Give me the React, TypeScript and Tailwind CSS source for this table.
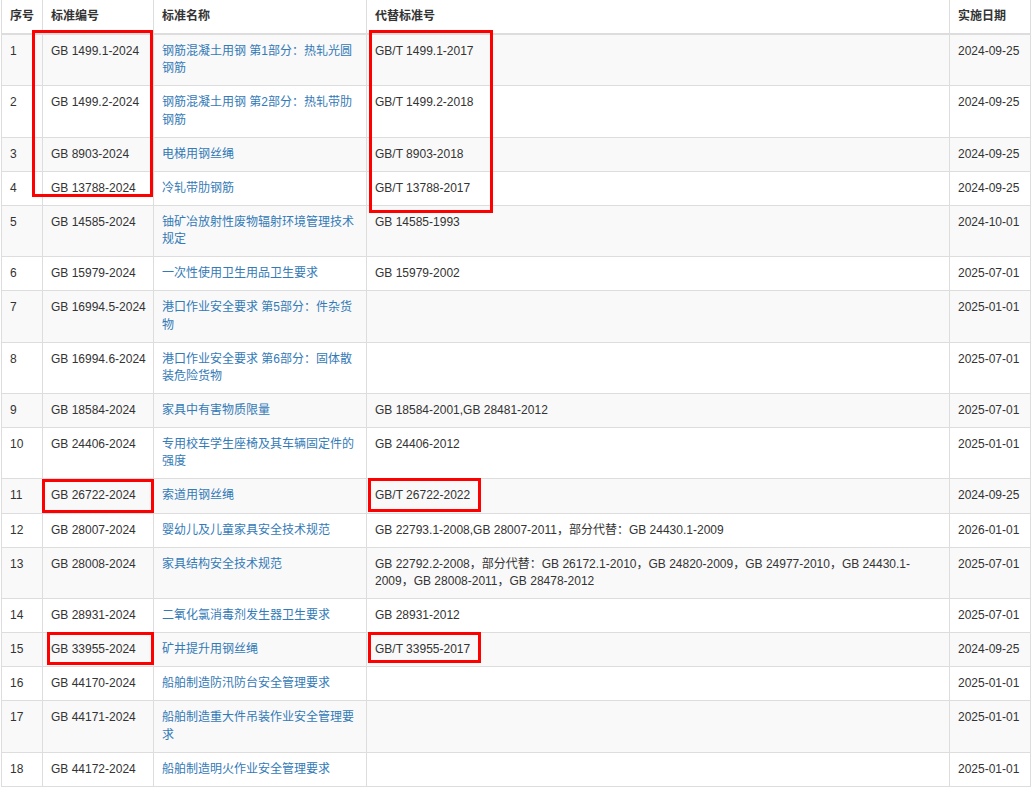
import React from "react";

type Row = {
  no: number;
  code: string;
  name: string;
  replaces: string;
  date: string;
};

const rows: Row[] = [
  { no: 1, code: "GB 1499.1-2024", name: "钢筋混凝土用钢 第1部分：热轧光圆钢筋", replaces: "GB/T 1499.1-2017", date: "2024-09-25" },
  { no: 2, code: "GB 1499.2-2024", name: "钢筋混凝土用钢 第2部分：热轧带肋钢筋", replaces: "GB/T 1499.2-2018", date: "2024-09-25" },
  { no: 3, code: "GB 8903-2024", name: "电梯用钢丝绳", replaces: "GB/T 8903-2018", date: "2024-09-25" },
  { no: 4, code: "GB 13788-2024", name: "冷轧带肋钢筋", replaces: "GB/T 13788-2017", date: "2024-09-25" },
  { no: 5, code: "GB 14585-2024", name: "铀矿冶放射性废物辐射环境管理技术规定", replaces: "GB 14585-1993", date: "2024-10-01" },
  { no: 6, code: "GB 15979-2024", name: "一次性使用卫生用品卫生要求", replaces: "GB 15979-2002", date: "2025-07-01" },
  { no: 7, code: "GB 16994.5-2024", name: "港口作业安全要求 第5部分：件杂货物", replaces: "", date: "2025-01-01" },
  { no: 8, code: "GB 16994.6-2024", name: "港口作业安全要求 第6部分：固体散装危险货物", replaces: "", date: "2025-07-01" },
  { no: 9, code: "GB 18584-2024", name: "家具中有害物质限量", replaces: "GB 18584-2001,GB 28481-2012", date: "2025-07-01" },
  { no: 10, code: "GB 24406-2024", name: "专用校车学生座椅及其车辆固定件的强度", replaces: "GB 24406-2012", date: "2025-01-01" },
  { no: 11, code: "GB 26722-2024", name: "索道用钢丝绳", replaces: "GB/T 26722-2022", date: "2024-09-25" },
  { no: 12, code: "GB 28007-2024", name: "婴幼儿及儿童家具安全技术规范", replaces: "GB 22793.1-2008,GB 28007-2011，部分代替：GB 24430.1-2009", date: "2026-01-01" },
  {
    no: 13,
    code: "GB 28008-2024",
    name: "家具结构安全技术规范",
    replaces: "GB 22792.2-2008，部分代替：GB 26172.1-2010，GB 24820-2009，GB 24977-2010，GB 24430.1-2009，GB 28008-2011，GB 28478-2012",
    date: "2025-07-01",
  },
  { no: 14, code: "GB 28931-2024", name: "二氧化氯消毒剂发生器卫生要求", replaces: "GB 28931-2012", date: "2025-07-01" },
  { no: 15, code: "GB 33955-2024", name: "矿井提升用钢丝绳", replaces: "GB/T 33955-2017", date: "2024-09-25" },
  { no: 16, code: "GB 44170-2024", name: "船舶制造防汛防台安全管理要求", replaces: "", date: "2025-01-01" },
  { no: 17, code: "GB 44171-2024", name: "船舶制造重大件吊装作业安全管理要求", replaces: "", date: "2025-01-01" },
  { no: 18, code: "GB 44172-2024", name: "船舶制造明火作业安全管理要求", replaces: "", date: "2025-01-01" },
];

const th = "border border-t-0 border-b-2 border-[#ddd] p-2 text-left align-bottom font-bold";
const td = "border border-[#ddd] p-2 align-top";

export default function App() {
  return (
    <div
      className="relative min-h-[790px] w-[1033px] overflow-hidden bg-white pl-px text-[12px] leading-[1.42857] text-[#333]"
      style={{ fontFamily: '"Liberation Sans", "Noto Sans CJK SC", sans-serif' }}
    >
      <table className="w-[1029px] table-fixed border-collapse">
        <colgroup>
          <col className="w-[41px]" />
          <col className="w-[111px]" />
          <col className="w-[213px]" />
          <col className="w-[583px]" />
          <col className="w-[81px]" />
        </colgroup>
        <thead>
          <tr>
            <th className={th}>序号</th>
            <th className={th}>标准编号</th>
            <th className={th}>标准名称</th>
            <th className={th}>代替标准号</th>
            <th className={th}>实施日期</th>
          </tr>
        </thead>
        <tbody>
          {rows.map((r) => (
            <tr key={r.no} className={r.no % 2 === 1 ? "bg-[#f9f9f9]" : "bg-white"}>
              <td className={td}>{r.no}</td>
              <td className={`${td} whitespace-nowrap`}>{r.code}</td>
              <td className={td}>
                <a className="text-[#337ab7]">{r.name}</a>
              </td>
              <td className={td}>{r.replaces}</td>
              <td className={`${td} whitespace-nowrap`}>{r.date}</td>
            </tr>
          ))}
        </tbody>
      </table>

      {/* red highlight boxes drawn over the table */}
      <div className="pointer-events-none absolute left-[32px] top-[30px] h-[167px] w-[121px] border-[3px] border-[#ff0000]" />
      <div className="pointer-events-none absolute left-[369px] top-[30px] h-[183px] w-[124px] border-[3px] border-[#ff0000]" />
      <div className="pointer-events-none absolute left-[42px] top-[479px] h-[34px] w-[112px] border-[3px] border-[#ff0000]" />
      <div className="pointer-events-none absolute left-[368px] top-[478px] h-[34px] w-[113px] border-[3px] border-[#ff0000]" />
      <div className="pointer-events-none absolute left-[47px] top-[632px] h-[33px] w-[107px] border-[3px] border-[#ff0000]" />
      <div className="pointer-events-none absolute left-[368px] top-[632px] h-[31px] w-[113px] border-[3px] border-[#ff0000]" />
    </div>
  );
}
